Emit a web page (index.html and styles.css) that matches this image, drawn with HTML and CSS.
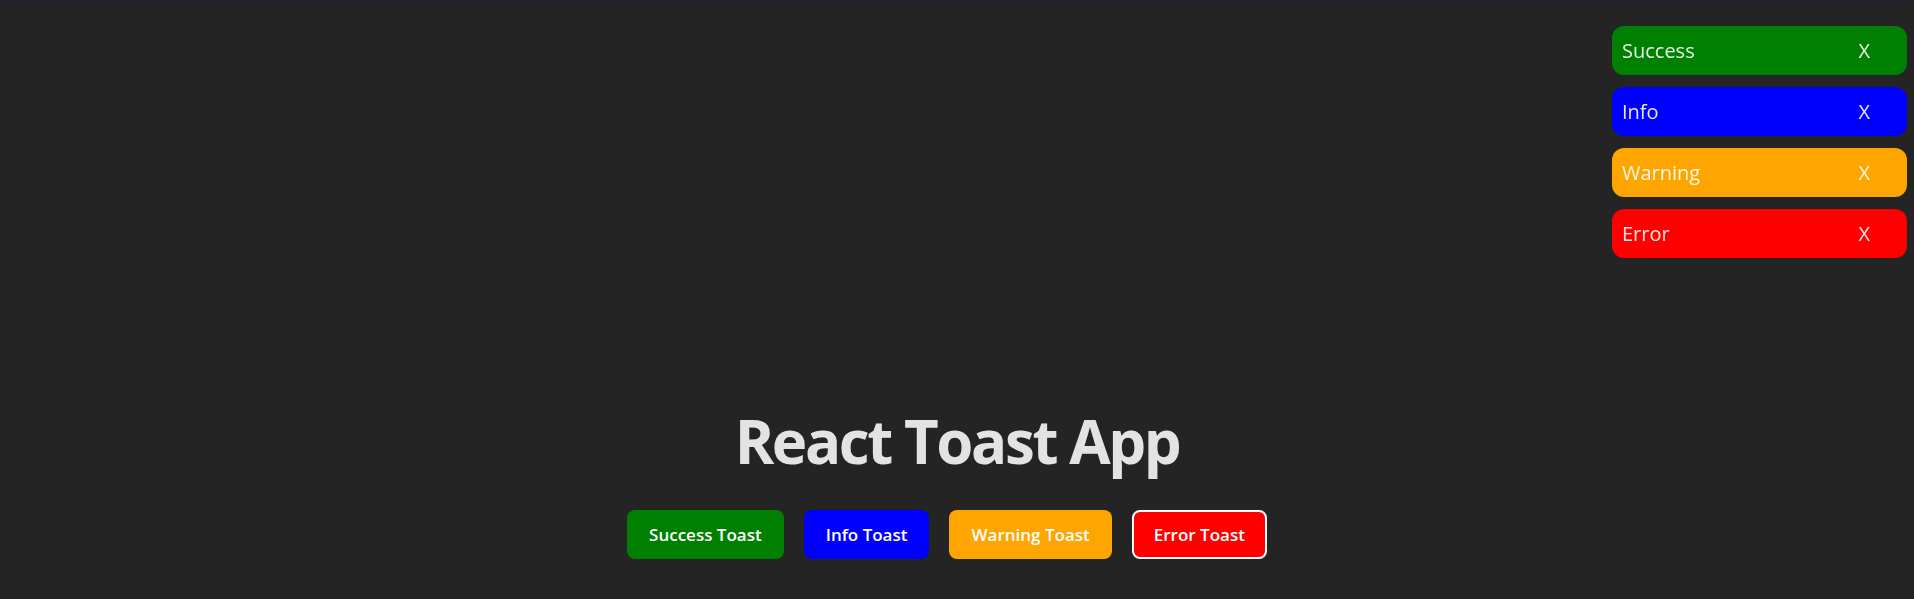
FILE: index.html
```html
<!DOCTYPE html>
<html lang="en">
<head>
<meta charset="UTF-8">
<title>React Toast App</title>
<link rel="stylesheet" href="styles.css">
</head>
<body>
<div class="topbar"></div>
<main class="app">
  <h1 class="title">React Toast App</h1>
  <div class="actions">
    <button class="btn btn-success">Success Toast</button>
    <button class="btn btn-info">Info Toast</button>
    <button class="btn btn-warning">Warning Toast</button>
    <button class="btn btn-error">Error Toast</button>
  </div>
</main>
<div class="toasts">
  <div class="toast toast-success"><span class="msg">Success</span><span class="close">X</span></div>
  <div class="toast toast-info"><span class="msg">Info</span><span class="close">X</span></div>
  <div class="toast toast-warning"><span class="msg">Warning</span><span class="close">X</span></div>
  <div class="toast toast-error"><span class="msg">Error</span><span class="close">X</span></div>
</div>
</body>
</html>
```
FILE: styles.css
```css
html, body {
  margin: 0;
  padding: 0;
  height: 100%;
}
body {
  background: #242424;
  font-family: "Open Sans", "Noto Sans", sans-serif;
  overflow: hidden;
}
.topbar {
  height: 5px;
  background: #212428;
}
.app {
  height: calc(100vh - 5px);
  box-sizing: border-box;
  display: flex;
  flex-direction: column;
  align-items: center;
  justify-content: flex-end;
  padding-bottom: 40px;
}
.title {
  margin: 0 0 39px 0;
  font-size: 60px;
  line-height: 60px;
  font-weight: 700;
  letter-spacing: -2.4px;
  color: #e3e3e3;
}
.actions {
  display: flex;
}
.btn {
  height: 49px;
  margin-right: 20px;
  padding: 0 20px;
  border: 2px solid transparent;
  border-radius: 8px;
  font-family: "Open Sans", "Noto Sans", sans-serif;
  font-size: 17px;
  font-weight: 600;
  color: #ffffff;
  cursor: pointer;
}
.btn-success { background: #008000; }
.btn-info { background: #0000ff; }
.btn-warning { background: #ffa500; }
.btn-error { background: #ff0000; border-color: #ffffff; }
.toasts {
  position: fixed;
  top: 26px;
  right: 7px;
  width: 295px;
  display: flex;
  flex-direction: column;
  gap: 12px;
}
.toast {
  height: 49px;
  box-sizing: border-box;
  display: flex;
  align-items: center;
  justify-content: space-between;
  padding: 0 37px 0 10px;
  border-radius: 12px;
  font-size: 20px;
  color: rgba(255, 255, 255, 0.9);
}
.toast-success { background: #008000; }
.toast-info { background: #0000ff; }
.toast-warning { background: #ffa500; }
.toast-error { background: #ff0000; }
.close {
  cursor: pointer;
}
```
